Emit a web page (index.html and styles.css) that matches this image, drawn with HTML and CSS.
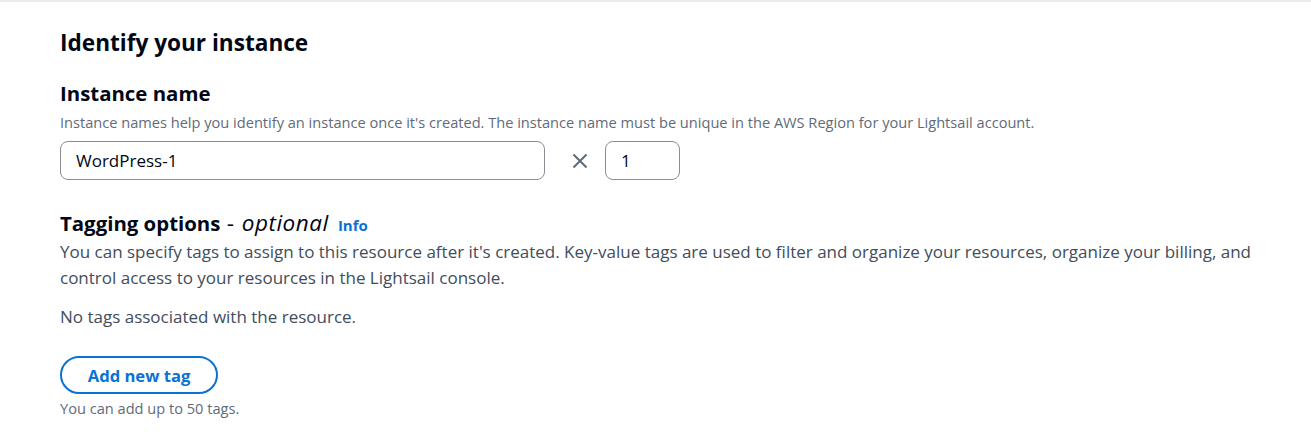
FILE: index.html
```html
<!DOCTYPE html>
<html lang="en">
<head>
  <meta charset="UTF-8" />
  <meta name="viewport" content="width=device-width, initial-scale=1.0" />
  <title>Identify your instance</title>
  <link rel="stylesheet" href="styles.css">
</head>
<body>

  <div class="panel">
    <h2 class="panel-title">Identify your instance</h2>

    <section class="field">
      <h3 class="field-label">Instance name</h3>
      <p class="hint">Instance names help you identify an instance once it's created. The instance name must be unique in the AWS Region for your Lightsail account.</p>
      <div class="name-row">
        <input type="text" class="text-input name-input" value="WordPress-1" />
        <span class="times">
          <svg width="16" height="16" viewBox="0 0 16 16">
            <path d="M1.5 1.5 L14.5 14.5 M14.5 1.5 L1.5 14.5" stroke="#5f6b7a" stroke-width="2" fill="none" />
          </svg>
        </span>
        <input type="text" class="text-input count-input" value="1" />
      </div>
    </section>

    <section class="field tags">
      <h3 class="field-label">Tagging options<span class="opt"> - <em>optional</em></span> <a href="#" class="info">Info</a></h3>
      <p class="desc">You can specify tags to assign to this resource after it's created. Key-value tags are used to filter and organize your resources, organize your billing, and control access to your resources in the Lightsail console.</p>
      <p class="empty">No tags associated with the resource.</p>
      <button type="button" class="add-btn">Add new tag</button>
      <p class="hint">You can add up to 50 tags.</p>
    </section>
  </div>

</body>
</html>
```

FILE: styles.css
```css
* {
  box-sizing: border-box;
}

html, body {
  margin: 0;
  padding: 0;
  background: #ffffff;
  font-family: 'Open Sans', 'Noto Sans', sans-serif;
  color: #000716;
}

body {
  border-top: 2px solid #e9ebed;
}

.panel {
  padding: 26px 40px 20px 60px;
}

.panel-title {
  margin: 0 0 22px;
  font-size: 22.6px;
  line-height: 30px;
  font-weight: 700;
}

.field-label {
  margin: 0;
  font-size: 20.4px;
  line-height: 26px;
  font-weight: 700;
}

.opt {
  font-weight: 400;
  font-size: 22.5px;
  letter-spacing: 0.5px;
}

.opt em {
  margin-left: 1px;
}

.info {
  margin-left: 4px;
  font-size: 15px;
  font-weight: 700;
  color: #0972d3;
  text-decoration: none;
}

.hint {
  margin: 6px 0 0;
  font-size: 14.6px;
  line-height: 20px;
  color: #5f6b7a;
}

.name-row {
  display: flex;
  align-items: center;
  margin-top: 9px;
}

.text-input {
  height: 39px;
  padding: 0 15px;
  border: 1px solid #8c8c94;
  border-radius: 8px;
  font-family: inherit;
  font-size: 17px;
  color: #000716;
  background: #ffffff;
}

.name-input {
  width: 485px;
}

.count-input {
  width: 75px;
}

.times {
  display: flex;
  width: 50px;
  margin-left: 10px;
  justify-content: center;
}

.tags {
  margin-top: 30px;
}

.desc {
  margin: 1px 0 0;
  font-size: 17px;
  line-height: 26px;
  color: #414d5c;
}

.empty {
  margin: 13px 0 0;
  font-size: 17px;
  line-height: 26px;
  color: #414d5c;
}

.add-btn {
  display: block;
  margin-top: 26px;
  height: 38px;
  width: 158px;
  padding: 0;
  border: 2px solid #0972d3;
  border-radius: 20px;
  background: #ffffff;
  color: #0972d3;
  font-family: inherit;
  font-size: 16.6px;
  font-weight: 700;
  cursor: pointer;
}

.tags .hint {
  margin-top: 4px;
}
```
